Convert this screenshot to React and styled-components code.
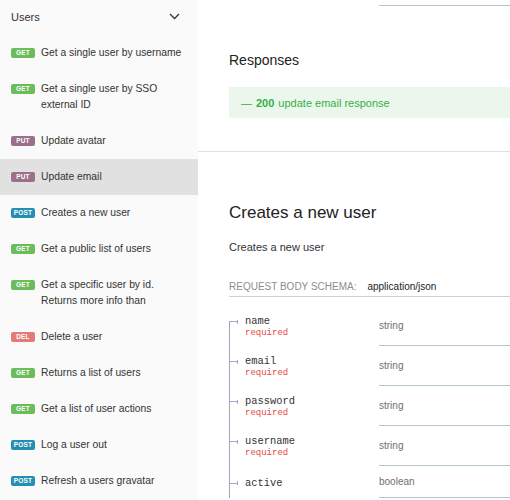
import React from 'react';
import styled, { createGlobalStyle } from 'styled-components';

const GlobalStyle = createGlobalStyle`
  html, body {
    margin: 0;
    padding: 0;
    overflow: hidden;
  }
  body {
    font-family: 'Liberation Sans', Helvetica, Arial, sans-serif;
    color: #333;
  }
`;

const methodColors = {
  get: '#6bbd5b',
  put: '#9b708b',
  post: '#248fb2',
  del: '#e27a7a',
};

const Layout = styled.div`
  display: flex;
  width: 510px;
  height: 500px;
  overflow: hidden;
`;

const Sidebar = styled.nav`
  width: 198px;
  flex-shrink: 0;
  background: #fafafa;
  overflow: hidden;
`;

const GroupHeader = styled.div`
  display: flex;
  align-items: center;
  justify-content: space-between;
  height: 33px;
  padding: 0 18px 2px 11px;
  font-size: 11px;
  color: #333;
`;

const MenuItem = styled.div`
  display: flex;
  align-items: flex-start;
  gap: 6px;
  padding: 10px 12px 10px 11px;
  font-size: 10.3px;
  line-height: 16px;
  color: #333;
  background: ${(p) => (p.$active ? '#e1e1e1' : 'transparent')};
`;

const Badge = styled.span`
  flex-shrink: 0;
  width: 24px;
  height: 10px;
  margin-top: 3px;
  border-radius: 2px;
  background: ${(p) => methodColors[p.$method]};
  color: #fff;
  font-size: 6.5px;
  font-weight: 700;
  line-height: 10px;
  text-align: center;
  text-transform: uppercase;
  letter-spacing: 0.2px;
`;

const Main = styled.main`
  flex: 1;
  background: #fff;
  overflow: hidden;
`;

const PrevTypeCell = styled.div`
  margin-left: 181px;
  height: 5px;
  border-bottom: 1px solid #b3c4cc;
`;

const Section = styled.section`
  padding: ${(p) => p.$pad};
  border-top: ${(p) => (p.$divided ? '1px solid #e1e1e1' : 'none')};
`;

const SectionTitle = styled.h3`
  margin: 0;
  font-size: 14px;
  line-height: 18px;
  font-weight: 400;
  color: #222;
`;

const OperationTitle = styled.h2`
  margin: 0;
  font-size: 17px;
  line-height: 22px;
  font-weight: 400;
  color: #222;
`;

const ResponseBox = styled.div`
  display: flex;
  align-items: center;
  gap: 4px;
  height: 31px;
  margin-top: 18px;
  padding: 0 12px;
  background: #ebf7ed;
  color: #34b044;
  font-size: 11px;

  strong {
    font-weight: 700;
  }
`;

const Description = styled.p`
  margin: 15px 0 0;
  font-size: 11px;
  line-height: 16px;
  color: #333;
`;

const SchemaHeader = styled.div`
  display: flex;
  gap: 11px;
  margin-top: 25px;
  padding-bottom: 2px;
  border-bottom: 1px solid #cfcfcf;
  font-size: 10px;
  line-height: 14px;
`;

const SchemaLabel = styled.span`
  color: #8d8d8d;
  text-transform: uppercase;
`;

const SchemaType = styled.span`
  color: #222;
`;

const Properties = styled.div`
  margin-top: 9px;
`;

const PropRow = styled.div`
  display: flex;
  min-height: 32px;
`;

const NameCell = styled.div`
  width: 150px;
  flex-shrink: 0;
  display: flex;
  flex-direction: column;
  justify-content: center;
  padding: 9px 0 7px;
  box-sizing: border-box;
  background-image: linear-gradient(
    transparent ${(p) => (p.$first ? '16px' : '0')},
    #a3a3cc ${(p) => (p.$first ? '16px' : '0')}
  );
  background-size: 1px 100%;
  background-repeat: no-repeat;
`;

const PropName = styled.span`
  display: flex;
  align-items: center;
  font-family: 'Liberation Mono', Courier, monospace;
  font-size: 10.4px;
  line-height: 13px;
  color: #333;
`;

const Bullet = styled.span`
  display: inline-flex;
  align-items: center;
  margin-right: 7px;

  &::before {
    content: '';
    width: 8px;
    height: 1px;
    background: #a3a3cc;
  }
  &::after {
    content: '';
    width: 1px;
    height: 4px;
    background: #a3a3cc;
  }
`;

const Required = styled.span`
  padding-left: 16px;
  font-family: 'Liberation Mono', Courier, monospace;
  font-size: 9px;
  line-height: 11px;
  color: #e84545;
`;

const TypeCell = styled.div`
  flex: 1;
  display: flex;
  align-items: center;
  border-bottom: 1px solid #b3c4cc;
  font-size: 10px;
  color: #707070;
`;

const menu = [
  { method: 'get', label: 'Get a single user by username' },
  { method: 'get', label: 'Get a single user by SSO external ID' },
  { method: 'put', label: 'Update avatar' },
  { method: 'put', label: 'Update email', active: true },
  { method: 'post', label: 'Creates a new user' },
  { method: 'get', label: 'Get a public list of users' },
  { method: 'get', label: 'Get a specific user by id. Returns more info than' },
  { method: 'del', label: 'Delete a user' },
  { method: 'get', label: 'Returns a list of users' },
  { method: 'get', label: 'Get a list of user actions' },
  { method: 'post', label: 'Log a user out' },
  { method: 'post', label: 'Refresh a users gravatar' },
];

const props = [
  { name: 'name', type: 'string', required: true },
  { name: 'email', type: 'string', required: true },
  { name: 'password', type: 'string', required: true },
  { name: 'username', type: 'string', required: true },
  { name: 'active', type: 'boolean' },
];

function Chevron() {
  return (
    <svg width="11" height="7" viewBox="0 0 11 7" fill="none">
      <path d="M1 1l4.5 4.5L10 1" stroke="#333" strokeWidth="1.3" />
    </svg>
  );
}

export default function App() {
  return (
    <Layout>
      <GlobalStyle />
      <Sidebar>
        <GroupHeader>
          <span>Users</span>
          <Chevron />
        </GroupHeader>
        {menu.map((item) => (
          <MenuItem key={item.label} $active={item.active}>
            <Badge $method={item.method}>{item.method}</Badge>
            <span>{item.label}</span>
          </MenuItem>
        ))}
      </Sidebar>

      <Main>
        <PrevTypeCell />
        <Section $pad="45px 0 33px 31px">
          <SectionTitle>Responses</SectionTitle>
          <ResponseBox>
            <span>—</span>
            <strong>200</strong>
            <span>update email response</span>
          </ResponseBox>
        </Section>

        <Section $divided $pad="50px 0 0 31px">
          <OperationTitle>Creates a new user</OperationTitle>
          <Description>Creates a new user</Description>
          <SchemaHeader>
            <SchemaLabel>Request Body schema:</SchemaLabel>
            <SchemaType>application/json</SchemaType>
          </SchemaHeader>
          <Properties>
            {props.map((p, i) => (
              <PropRow key={p.name}>
                <NameCell $first={i === 0}>
                  <PropName>
                    <Bullet />
                    {p.name}
                  </PropName>
                  {p.required && <Required>required</Required>}
                </NameCell>
                <TypeCell>{p.type}</TypeCell>
              </PropRow>
            ))}
          </Properties>
        </Section>
      </Main>
    </Layout>
  );
}
